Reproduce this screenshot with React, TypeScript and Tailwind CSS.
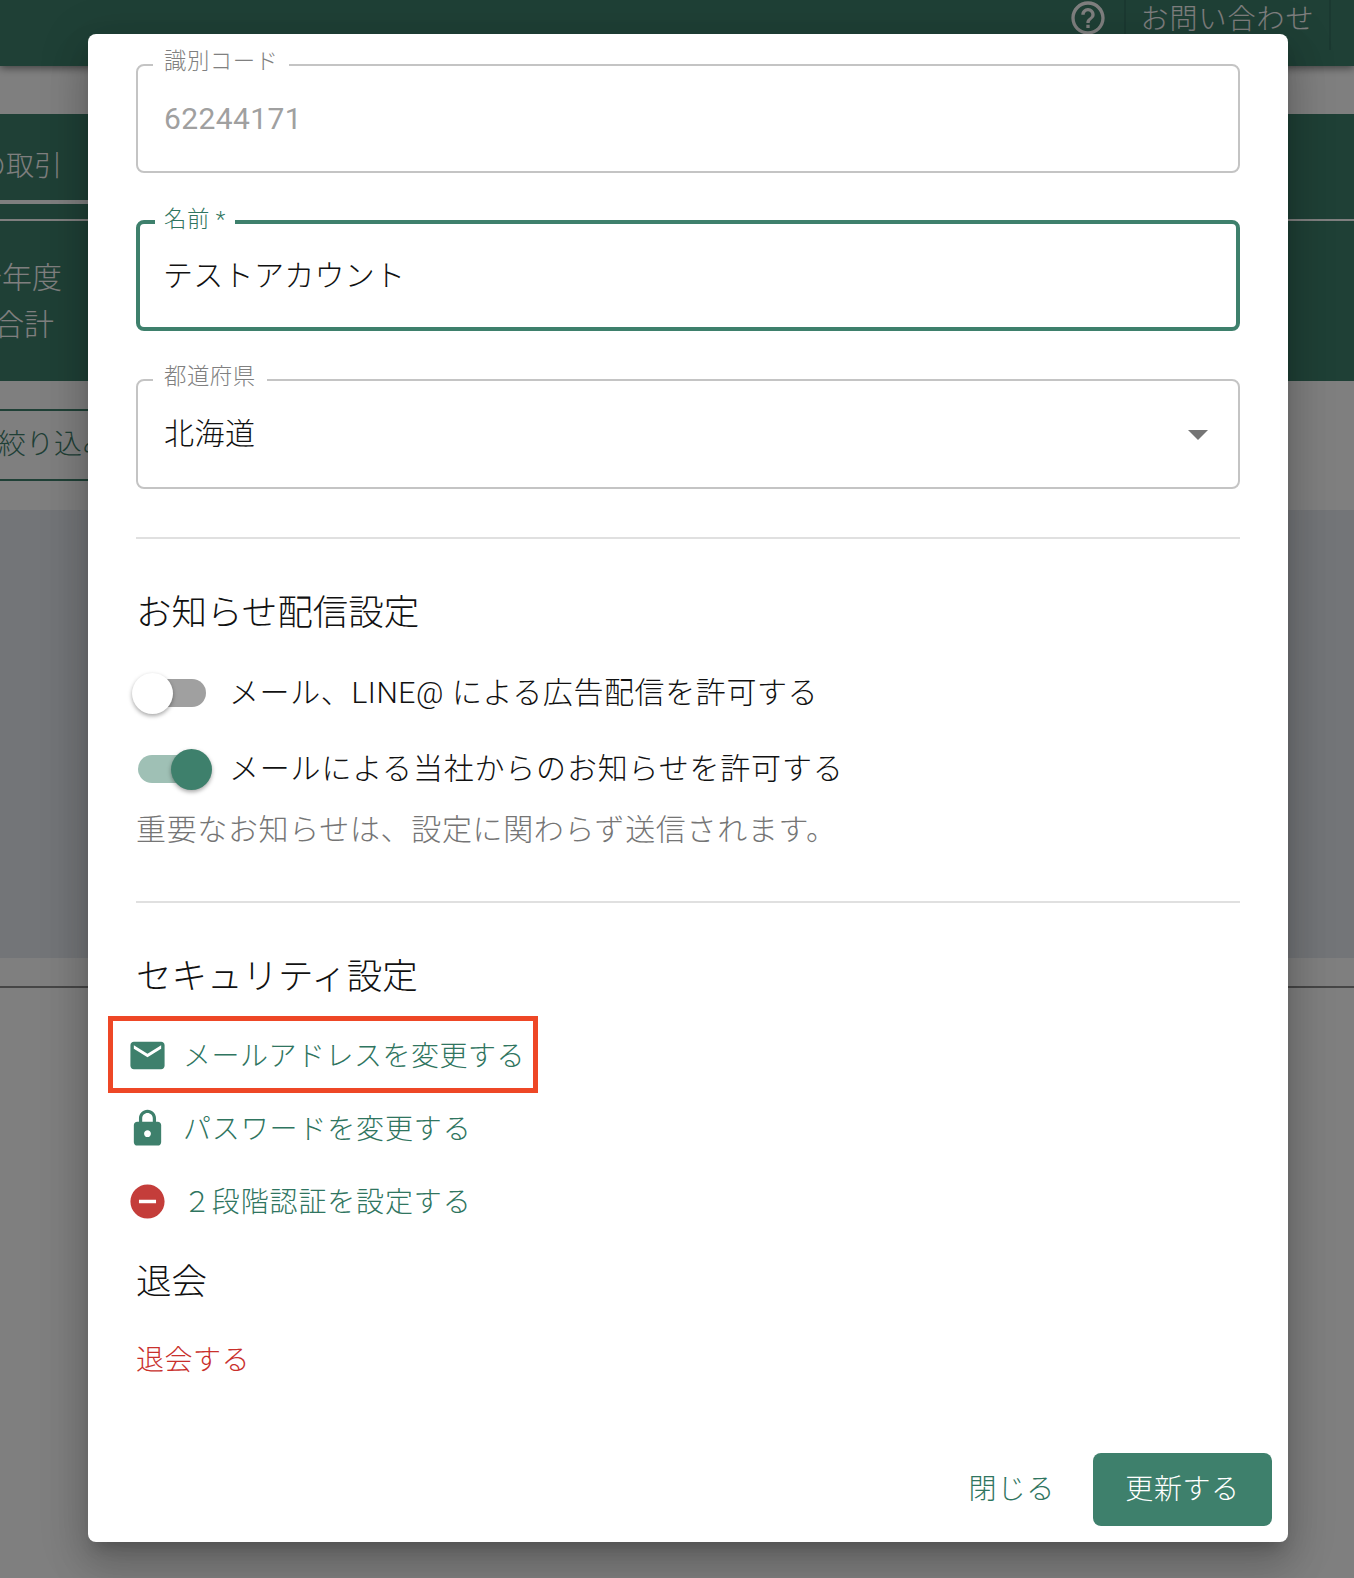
import React from "react";

const FONT = "font-['Roboto','Noto_Sans_CJK_JP',sans-serif]";

const Field = ({
  label,
  focused,
  className,
  children,
}: {
  label: React.ReactNode;
  focused?: boolean;
  className?: string;
  children: React.ReactNode;
}) => (
  <div
    className={`relative flex items-center rounded-[8px] pr-[16px] ${
      focused ? "border-[4px] border-[#3e806c] pl-[23px]" : "border-2 border-[#c4c4c4] pl-[26px]"
    } ${className}`}
  >
    <span
      className={`absolute bg-white text-[22.4px] leading-[30px] tracking-[0.5px] whitespace-nowrap ${
        focused
          ? "-top-[20px] left-[15px] px-[9px] text-[#2f7560]"
          : "-top-[20px] left-[15px] px-[11px] text-[#808080]"
      }`}
    >
      {label}
    </span>
    {children}
  </div>
);

const Toggle = ({ on, label, className }: { on?: boolean; label: string; className?: string }) => (
  <div className="flex h-[76px] items-center">
    <div
      className={`ml-[2px] flex h-7 w-[68px] shrink-0 items-center rounded-full ${
        on ? "justify-end bg-[#9fc0b5]" : "bg-[#a0a0a0]"
      }`}
    >
      <div
        className={`size-[41px] shrink-0 rounded-full shadow-[0_2px_4px_rgba(0,0,0,0.35)] ${
          on ? "-mr-[6px] bg-[#3e806c]" : "-ml-[6px] bg-white"
        }`}
      />
    </div>
    <span className={`ml-[23px] text-[30px] leading-[40px] text-[#111111] ${className}`}>{label}</span>
  </div>
);

const SecurityLink = ({
  icon,
  iconColor = "#3e806c",
  className,
  children,
}: {
  icon: string;
  iconColor?: string;
  className?: string;
  children: React.ReactNode;
}) => (
  <div className="-ml-[9px] flex h-[73px] items-center">
    <svg viewBox="0 0 24 24" className="size-[41px] shrink-0" fill={iconColor}>
      <path d={icon} />
    </svg>
    <span className={`ml-[15px] translate-y-px text-[28px] leading-[40px] text-[#2f7560] ${className}`}>
      {children}
    </span>
  </div>
);

export default function App() {
  return (
    <div className={`relative h-[1578px] w-full overflow-hidden bg-white font-light ${FONT}`}>
      {/* page behind the dialog */}
      <header className="relative flex h-[66px] items-start justify-end bg-[#3e806c] pr-[23px] text-white shadow-[0_2px_8px_rgba(0,0,0,0.5)]">
        <svg viewBox="0 0 24 24" className="-mt-[2px] mr-[16px] size-10" fill="#ffffff">
          <path d="M11 18h2v-2h-2v2zm1-16C6.48 2 2 6.48 2 12s4.48 10 10 10 10-4.48 10-10S17.52 2 12 2zm0 18c-4.41 0-8-3.59-8-8s3.59-8 8-8 8 3.59 8 8-3.59 8-8 8zm0-14c-2.21 0-4 1.79-4 4h2c0-1.1.9-2 2-2s2 .9 2 2c0 2-3 1.75-3 5h2c0-2.25 3-2.5 3-5 0-2.21-1.79-4-4-4z" />
        </svg>
        <div className="flex h-[50px] w-[207px] items-start justify-center border-x-2 border-[#367362] pt-[2px] text-[28px] leading-[36px] tracking-[1px]">
          お問い合わせ
        </div>
      </header>

      <section className="mt-[48px] h-[267px] bg-[#3e806c] text-white">
        <div className="h-[107px] border-b-2 border-white">
          <div className="flex h-[90px] w-[200px] items-end border-b-[4px] border-white">
            <span className="-ml-[22px] pb-[13px] text-[28px] leading-[40px] whitespace-nowrap">の取引</span>
          </div>
        </div>
        <div className="-ml-[28px] pt-[33px] text-[30px] leading-[47px]">
          <div>今年度</div>
          <div className="ml-[22px]">合計</div>
        </div>
      </section>

      <div className="h-[129px] pt-[28px]">
        <div className="flex h-[72px] w-[300px] items-center border-y-2 border-[#3e806c] text-[28px] text-[#3e806c]">
          <span className="-ml-[2px] whitespace-nowrap">絞り込み</span>
        </div>
      </div>
      <div className="h-[448px] bg-[#e6eaf0]" />
      <div className="h-[28px]" />
      <div className="h-[2px] bg-[#8c8c8c]" />

      {/* dim layer */}
      <div className="absolute inset-0 bg-black/50" />

      {/* dialog */}
      <div className="absolute left-[88px] top-[34px] w-[1200px] rounded-[8px] bg-white shadow-[0_11px_15px_-7px_rgba(0,0,0,0.2),0_24px_38px_3px_rgba(0,0,0,0.14),0_9px_46px_8px_rgba(0,0,0,0.12)]">
        <div className="pl-[48px] pr-[48px] pt-[30px]">
          <Field label="識別コード" className="h-[109px]">
            <span className="text-[30px] font-normal leading-[40px] tracking-[0.4px] text-[#a0a0a0]">62244171</span>
          </Field>
          <Field focused label="名前 *" className="mt-[47px] h-[111px]">
            <span className="text-[30px] leading-[40px] tracking-[0.3px] text-[#111111]">テストアカウント</span>
          </Field>
          <Field label="都道府県" className="mt-[48px] h-[110px] justify-between">
            <span className="text-[30px] leading-[40px] tracking-[0.5px] text-[#111111]">北海道</span>
            <svg viewBox="0 0 24 24" className="size-12" fill="#757575">
              <path d="M7 10l5 5 5-5z" />
            </svg>
          </Field>

          <div className="mt-[48px] h-[2px] bg-[#e0e0e0]" />

          <h2 className="mt-[49px] mb-[-1px] text-[35.5px] font-light leading-[50px] text-[#111111]">お知らせ配信設定</h2>
          <div className="mt-[18px]">
            <Toggle className="tracking-[0.6px]" label="メール、LINE@ による広告配信を許可する" />
            <Toggle on className="tracking-[0.8px]" label="メールによる当社からのお知らせを許可する" />
          </div>
          <p className="text-[30px] leading-[46px] tracking-[0.65px] text-[#757575]">
            重要なお知らせは、設定に関わらず送信されます。
          </p>

          <div className="mt-[48px] h-[2px] bg-[#e0e0e0]" />

          <h2 className="mt-[49px] mb-[-1px] text-[35.5px] font-light leading-[50px] text-[#111111]">セキュリティ設定</h2>
          <div className="relative mt-[18px]">
            <SecurityLink
              className="tracking-[0.5px]"
              icon="M20 4H4c-1.1 0-1.99.9-1.99 2L2 18c0 1.1.9 2 2 2h16c1.1 0 2-.9 2-2V6c0-1.1-.9-2-2-2zm0 4l-8 5-8-5V6l8 5 8-5v2z"
            >
              メールアドレスを変更する
            </SecurityLink>
            <SecurityLink
              className="tracking-[0.85px]"
              icon="M18 8h-1V6c0-2.76-2.24-5-5-5S7 3.24 7 6v2H6c-1.1 0-2 .9-2 2v10c0 1.1.9 2 2 2h12c1.1 0 2-.9 2-2V10c0-1.1-.9-2-2-2zm-6 9c-1.1 0-2-.9-2-2s.9-2 2-2 2 .9 2 2-.9 2-2 2zm3.1-9H8.9V6c0-1.71 1.39-3.1 3.1-3.1 1.71 0 3.1 1.39 3.1 3.1v2z"
            >
              パスワードを変更する
            </SecurityLink>
            <SecurityLink
              className="tracking-[0.85px]"
              iconColor="#c43d3a"
              icon="M12 2C6.48 2 2 6.48 2 12s4.48 10 10 10 10-4.48 10-10S17.52 2 12 2zm5 11H7v-2h10v2z"
            >
              ２段階認証を設定する
            </SecurityLink>
            {/* annotation box drawn over the first link */}
            <div className="pointer-events-none absolute -left-[28px] -top-[3px] h-[77px] w-[430px] border-[5px] border-[#ee4726]" />
          </div>

          <h2 className="mt-[19px] mb-[-1px] text-[35.5px] font-light leading-[50px] text-[#111111]">退会</h2>
          <div className="mt-[35px] mb-[-1px] text-[28px] leading-[40px] tracking-[0.5px] text-[#c9302c]">退会する</div>
        </div>

        <div className="mt-[73px] flex items-center justify-end pb-4 pr-4">
          <span className="text-[28px] tracking-[0.8px] text-[#2f7560]">閉じる</span>
          <div className="ml-[38px] flex h-[73px] w-[179px] items-center justify-center rounded-[8px] bg-[#3e806c] text-[28px] tracking-[0.6px] text-white">
            更新する
          </div>
        </div>
      </div>
    </div>
  );
}
